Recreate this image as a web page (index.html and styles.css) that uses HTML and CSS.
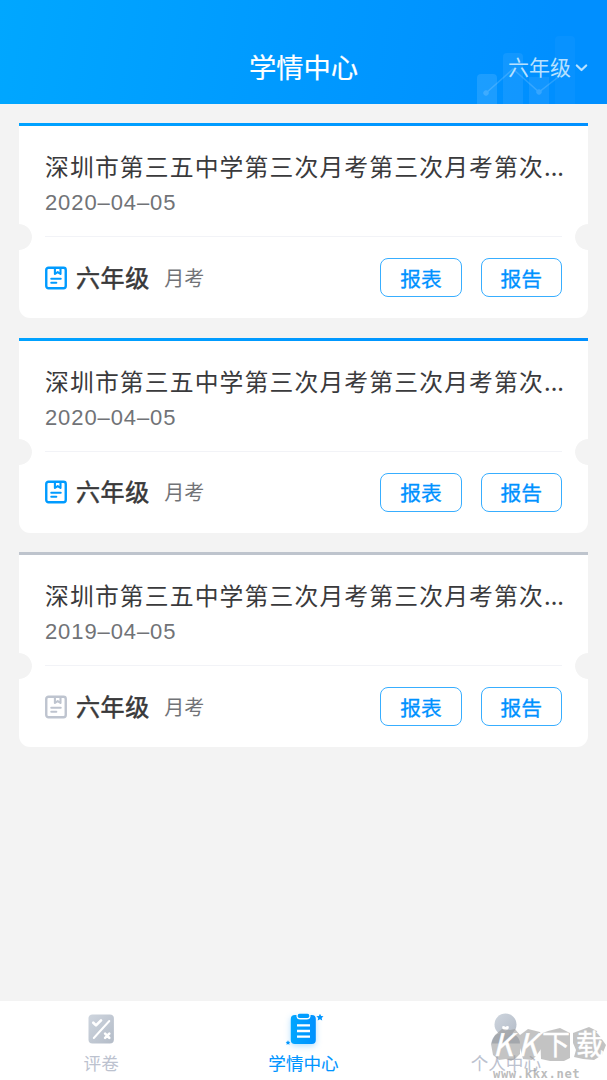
FILE: index.html
```html
<!DOCTYPE html>
<html lang="zh-CN">
<head>
<meta charset="utf-8">
<title>学情中心</title>
<link rel="stylesheet" href="styles.css">
</head>
<body>
<svg class="defs" aria-hidden="true">
  <defs>
    <linearGradient id="blue" x1="0" y1="0" x2="1" y2="0"><stop offset="0" stop-color="#00a6ff"/><stop offset="1" stop-color="#0091ff"/></linearGradient>
    <linearGradient id="gray" x1="0" y1="0" x2="1" y2="1"><stop offset="0" stop-color="#ced5de"/><stop offset="1" stop-color="#b4bcc8"/></linearGradient>
    <symbol id="paper" viewBox="0 0 22 24">
      <rect x="1.25" y="1.75" width="19.5" height="20.5" rx="2.2" fill="none" stroke="currentColor" stroke-width="2.4"/>
      <path d="M9.9 2v6l2.8-1.9L15.5 8V2M6.3 12.7h9.4M6.3 16.8h5" fill="none" stroke="currentColor" stroke-width="2.1" stroke-linecap="round" stroke-linejoin="round"/>
    </symbol>
  </defs>
</svg>
<div class="app">
  <header class="header">
    <svg class="header-chart" width="100" height="72" viewBox="0 0 100 72">
      <g fill="#fff">
        <path d="M0 72V46q0-4 4-4h12q4 0 4 4v26z" opacity=".11"/>
        <path d="M26 72V25q0-4 4-4h12q4 0 4 4v47z" opacity=".07"/>
        <path d="M52 72V45h20v27z" opacity=".07"/>
        <path d="M78 72V8q0-4 4-4h12q4 0 4 4v64z" opacity=".03"/>
      </g>
      <g opacity=".15" fill="#fff" stroke="#fff">
        <path d="M9 61l27-24 26 23 27-21" fill="none" stroke-width="1.5"/>
        <circle cx="9" cy="61" r="2.3"/><circle cx="62" cy="60" r="2.3"/>
      </g>
    </svg>
    <h1 class="header-title">学情中心</h1>
    <div class="grade-select"><span>六年级</span>
      <svg width="13" height="11" viewBox="0 0 13 11"><path d="M1.8 4.5l4.7 4.5 4.7-4.5" fill="none" stroke="currentColor" stroke-width="2.2" stroke-linecap="round" stroke-linejoin="round"/></svg>
    </div>
  </header>
  <main class="list">
    <article class="card">
      <div class="card-top">
        <h2 class="card-title">深圳市第三五中学第三次月考第三次月考第次<span class="dots">...</span></h2>
        <p class="card-date">2020–04–05</p>
      </div>
      <div class="card-bottom">
        <svg class="paper-icon" width="22" height="24"><use href="#paper"/></svg>
        <strong class="grade">六年级</strong><span class="kind">月考</span>
        <div class="actions"><button class="btn">报表</button><button class="btn">报告</button></div>
      </div>
    </article>
    <article class="card">
      <div class="card-top">
        <h2 class="card-title">深圳市第三五中学第三次月考第三次月考第次<span class="dots">...</span></h2>
        <p class="card-date">2020–04–05</p>
      </div>
      <div class="card-bottom">
        <svg class="paper-icon" width="22" height="24"><use href="#paper"/></svg>
        <strong class="grade">六年级</strong><span class="kind">月考</span>
        <div class="actions"><button class="btn">报表</button><button class="btn">报告</button></div>
      </div>
    </article>
    <article class="card card-past">
      <div class="card-top">
        <h2 class="card-title">深圳市第三五中学第三次月考第三次月考第次<span class="dots">...</span></h2>
        <p class="card-date">2019–04–05</p>
      </div>
      <div class="card-bottom">
        <svg class="paper-icon" width="22" height="24"><use href="#paper"/></svg>
        <strong class="grade">六年级</strong><span class="kind">月考</span>
        <div class="actions"><button class="btn">报表</button><button class="btn">报告</button></div>
      </div>
    </article>
  </main>
  <nav class="tabs">
    <a class="tab">
      <svg width="40" height="40" viewBox="0 0 40 40">
        <rect x="7.5" y="4.5" width="25.4" height="29" rx="4" fill="url(#gray)"/>
        <path d="M12.8 28L28.3 11" stroke="#fff" stroke-width="2" stroke-linecap="round"/>
        <path d="M12.3 12.8l2.7 2.6 5-5" fill="none" stroke="#fff" stroke-width="2.7" stroke-linecap="round" stroke-linejoin="round"/>
        <path d="M24.1 23.7l4.2 4.2m0-4.2l-4.2 4.2" stroke="#fff" stroke-width="2.6" stroke-linecap="round"/>
      </svg>
      <span>评卷</span>
    </a>
    <a class="tab tab-active">
      <svg width="40" height="40" viewBox="0 0 40 40">
        <rect class="clip-glow" x="7.8" y="5" width="25" height="29" rx="4" fill="url(#blue)"/>
        <path d="M13.5 4.5v1.2q0 3.8 3.8 3.8h6.4q3.8 0 3.8-3.8V4.5" fill="#fff"/>
        <rect x="14.7" y="3.7" width="11.6" height="4.4" rx="1.8" fill="#009dff"/>
        <path d="M14 15.3h13M14 21h13M14 26.7h13" stroke="#fff" stroke-width="2.3"/>
        <path fill="#0096ff" d="M37 3.8l1.100 2.200 2.400.3-1.800 1.700.5 2.500-2.200-1.200-2.300 1.200.5-2.500-1.800-1.700 2.500-.3zM5 30.300l.7 1.500 1.700.2-1.200 1.100.3 1.700-1.500-.8-1.500.8.3-1.700-1.200-1.100 1.700-.2z"/>
      </svg>
      <span>学情中心</span>
    </a>
    <a class="tab">
      <svg width="40" height="40" viewBox="0 0 40 40">
        <path d="M5.500 33.500c0-6 5-11.500 14-11.500s14.500 5.500 14.500 11.500z" fill="#b4bcc8"/>
        <circle cx="19.500" cy="14.500" r="11" fill="url(#gray)"/>
        <path d="M16.200 16.500q1.500-1.500 3.300.6 1.800-2.100 3.300-.6.400 3.500-3.300 4-3.700-.5-3.300-4z" fill="#fff"/>
      </svg>
      <span>个人中心</span>
    </a>
  </nav>
  <div class="watermark">
    <svg width="116" height="34" viewBox="0 0 116 34">
      <g fill="#999" opacity=".58">
        <path d="M0 17l4-9 7-6 8 1 5-1 5 6v19l-4 4-5 3-5-2-7 1-6-5z"/>
        <path d="M29 8l8-6 12 3 4 8-3 9-5 7-4 4-9-1-3-11z"/>
        <path d="M49 7l8-3 12-3 10 5v25l-8 4-12-1-9-2z"/>
        <path d="M82 6l8-3 8-3 8 4 4 7 5 7-4 10-8 5-11-1-9-2 2-7-3-7z"/>
      </g>
    </svg>
    <div class="watermark-name"><span class="mark-k">K</span><span class="mark-k mark-k2">K</span><span class="mark-xia">下</span><span>载</span></div>
    <div class="watermark-url">www.kkx.net</div>
  </div>
</div>
</body>
</html>
```
FILE: styles.css
```css
* { box-sizing: border-box; }
body {
  margin: 0;
  background: #f3f3f3;
  font-family: "Noto Sans CJK SC", sans-serif;
  color: #3a3a3c;
}
h1, h2, p { margin: 0; font-weight: 400; }
.defs { position: absolute; width: 0; height: 0; }
.app {
  position: relative;
  display: flex;
  flex-direction: column;
  width: 607px;
  height: 1080px;
  overflow: hidden;
}
.header {
  position: relative;
  display: grid;
  grid-template-columns: 1fr auto 1fr;
  align-items: center;
  height: 103.5px;
  padding: 29px 19px 0;
  color: #fff;
  background: linear-gradient(100deg, #00a7ff 0%, #0099ff 50%, #008fff 90%);
}
.header-chart { position: absolute; right: 30px; bottom: 0; }
.header-title {
  grid-column: 2;
  font-size: 27.3px;
  line-height: 40px;
  -webkit-text-stroke: .2px #fff;
}
.grade-select {
  position: relative;
  display: flex;
  align-items: center;
  justify-content: flex-end;
  gap: 4px;
  font-size: 21px;
  line-height: 32px;
  color: #b8e1ff;
}
.list {
  flex: 1;
  display: flex;
  flex-direction: column;
  gap: 19.3px;
  padding: 19.7px 19.3px;
}
.card {
  height: 195.2px;
  border-radius: 0 0 11px 11px;
  background:
    radial-gradient(circle at 0 114px, #f3f3f3 12.5px, transparent 13.2px),
    radial-gradient(circle at 100% 114px, #f3f3f3 12.5px, transparent 13.2px),
    linear-gradient(90deg, #00a2ff, #0090ff) 0 0 / 100% 3.4px no-repeat,
    #fff;
  padding: 0 25.7px;
}
.card-past {
  background:
    radial-gradient(circle at 0 114px, #f3f3f3 12.5px, transparent 13.2px),
    radial-gradient(circle at 100% 114px, #f3f3f3 12.5px, transparent 13.2px),
    linear-gradient(#bec4cd, #bec4cd) 0 0 / 100% 3.4px no-repeat,
    #fff;
}
.card-top {
  height: 114px;
  padding-top: 25px;
  border-bottom: 1px solid #f2f3f7;
}
.card-title {
  font-size: 23.8px;
  line-height: 36px;
  letter-spacing: 1.15px;
  white-space: nowrap;
}
.dots { letter-spacing: .1px; }
.card-date {
  padding-top: 2px;
  font-family: "Liberation Sans", sans-serif;
  font-size: 22px;
  line-height: 34px;
  letter-spacing: .9px;
  color: #717377;
}
.card-bottom {
  display: flex;
  align-items: center;
  height: 81px;
}
.paper-icon { color: #009bff; }
.card-past .paper-icon { color: #bec4cf; }
.grade {
  margin-left: 9px;
  padding-bottom: 1.5px;
  font-size: 24px;
  line-height: 36px;
  font-weight: 400;
  letter-spacing: .6px;
  -webkit-text-stroke: .5px #333;
}
.kind { margin-left: 14.5px; font-size: 20px; line-height: 30px; color: #717377; }
.actions { display: flex; gap: 19px; margin-left: auto; }
.btn {
  width: 81.3px;
  height: 39px;
  padding: 0;
  border: 1px solid #38aeff;
  border-radius: 8px;
  background: #fff;
  color: #0091ff;
  font: 400 20.8px/36px "Noto Sans CJK SC", sans-serif;
  -webkit-text-stroke: .3px #0091ff;
}
.tabs {
  display: grid;
  grid-template-columns: repeat(3, 1fr);
  height: 79.5px;
  background: #fff;
}
.tab {
  display: flex;
  flex-direction: column;
  align-items: center;
  padding-top: 9px;
  font-size: 17.6px;
  line-height: 26px;
  color: #bcc2cf;
}
.tab svg { overflow: visible; }
.tab-active { color: #0095ff; -webkit-text-stroke: .1px #0095ff; }
.clip-glow { filter: drop-shadow(0 2px 3px rgba(0, 150, 255, .3)); }
.watermark { position: absolute; left: 491px; top: 1027px; width: 116px; height: 53px; }
.watermark-name {
  position: absolute;
  left: 5px;
  top: -1px;
  display: flex;
  color: #fff;
  font-size: 28px;
  line-height: 34px;
  -webkit-text-stroke: .4px #fff;
}
.mark-k { width: 25px; font-size: 31px; transform: skewX(-14deg); }
.mark-k2 { width: 21px; }
.mark-xia { margin-right: 6px; }
.watermark-url {
  position: absolute;
  left: 2px;
  top: 40px;
  font: 700 12.2px/14px "DejaVu Sans Mono", monospace;
  letter-spacing: .6px;
  color: rgba(150, 150, 150, .65);
}
```
